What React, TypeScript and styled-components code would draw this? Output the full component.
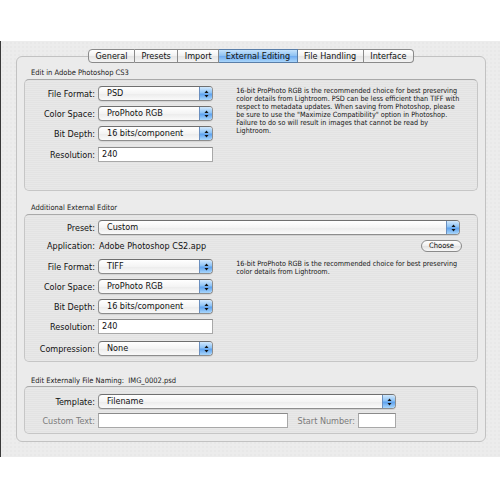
import React from "react";
import styled, { createGlobalStyle, css } from "styled-components";

const GlobalStyle = createGlobalStyle`
  html, body {
    margin: 0;
    padding: 0;
    background: #ffffff;
  }
  body {
    font-family: "DejaVu Sans Condensed", "Liberation Sans", sans-serif;
    font-size: 9px;
    color: #111;
  }
`;

const Window = styled.div`
  margin-top: 41px;
  height: 416px;
  box-sizing: border-box;
  background-color: #ececec;
  background-image: radial-gradient(#e2e2e2 0.6px, transparent 0.8px);
  background-size: 4px 4px;
  border-left: 1px solid #3a3a3a;
  padding: 8px 14px 0 15px;
  display: flex;
  flex-direction: column;
`;

const TabBar = styled.div`
  display: flex;
  justify-content: center;
  position: relative;
  z-index: 1;
  height: 14px;
`;

const Tab = styled.div<{ $active?: boolean }>`
  height: 14px;
  box-sizing: border-box;
  padding: 0 6.5px;
  display: flex;
  align-items: center;
  font-size: 9px;
  border: 1px solid #8a8a8a;
  border-left: none;
  background: linear-gradient(#ffffff, #f1f1f1 50%, #e4e4e4 51%, #f4f4f4);
  &:first-child {
    border-left: 1px solid #8a8a8a;
    border-radius: 4px 0 0 4px;
  }
  &:last-child {
    border-radius: 0 4px 4px 0;
  }
  ${(p) =>
    p.$active &&
    css`
      background: linear-gradient(#c4e1fb, #8cc0f2 50%, #6eaaf0 51%, #a9d6fb);
      border-color: #5a7ea8;
    `}
`;

const TabBox = styled.div`
  margin-top: -7px;
  flex: 0 0 auto;
  height: 386px;
  box-sizing: border-box;
  border: 1px solid #c2c2c2;
  border-radius: 6px;
  background: #ebebeb;
  padding: 9px 7px 0 7px;
  display: flex;
  flex-direction: column;
`;

const GroupTitle = styled.div<{ $h: number; $mt: number }>`
  height: ${(p) => p.$h}px;
  line-height: ${(p) => p.$h}px;
  margin-top: ${(p) => p.$mt}px;
  padding-left: 7px;
  font-size: 7.5px;
  color: #222;
`;

const Group = styled.div<{ $h: number; $pt: number }>`
  height: ${(p) => p.$h}px;
  box-sizing: border-box;
  padding: ${(p) => p.$pt}px 15px 0 0;
  border: 1px solid #c6c6c6;
  border-top-color: #a9a9a9;
  border-radius: 5px;
  background: repeating-linear-gradient(#e3e3e3 0 1px, #e8e8e8 1px 2px);
  display: flex;
  flex-direction: column;
`;

const Columns = styled.div<{ $mt?: number }>`
  display: flex;
  margin-top: ${(p) => p.$mt ?? 0}px;
`;

const FieldColumn = styled.div`
  width: 191px;
  display: flex;
  flex-direction: column;
  gap: 5px;
`;

const Row = styled.div<{ $mt?: number; $h?: number }>`
  display: flex;
  align-items: center;
  height: ${(p) => p.$h ?? 15}px;
  margin-top: ${(p) => p.$mt ?? 0}px;
`;

const Label = styled.div<{ $dim?: boolean; $w?: number }>`
  width: ${(p) => p.$w ?? 73}px;
  flex: 0 0 auto;
  text-align: right;
  padding-right: 3px;
  box-sizing: border-box;
  font-size: 9px;
  color: ${(p) => (p.$dim ? "#7b7b7b" : "#111")};
`;

const Value = styled.div`
  flex: 1;
  font-size: 9px;
  padding-left: 1px;
`;

const Popup = styled.div<{ $w: number }>`
  width: ${(p) => p.$w}px;
  height: 15px;
  box-sizing: border-box;
  display: flex;
  border: 1px solid #8d8d8d;
  border-top-color: #6f6f6f;
  border-radius: 4px;
  overflow: hidden;
  background: linear-gradient(#ffffff, #f4f4f4 50%, #ebebeb 51%, #fafafa);
  box-shadow: 0 1px 0 rgba(0, 0, 0, 0.08);
`;

const PopupText = styled.div`
  flex: 1;
  padding-left: 8px;
  font-size: 9px;
  line-height: 13px;
`;

const PopupArrow = styled.div`
  width: 12px;
  border-left: 1px solid #6a8fbf;
  background: linear-gradient(#d1e8fd, #8cc2f5 45%, #5ea2ee 55%, #a9d6fb);
  display: flex;
  align-items: center;
  justify-content: center;
`;

const TextField = styled.div<{ $w: number }>`
  width: ${(p) => p.$w}px;
  height: 15px;
  box-sizing: border-box;
  background: #fff;
  border: 1px solid #a8a8a8;
  border-top-color: #8a8a8a;
  padding-left: 3px;
  font-size: 9px;
  line-height: 13px;
`;

const Description = styled.p`
  margin: 1px 0 0 22px;
  width: 228px;
  font-size: 7.2px;
  line-height: 8px;
  color: #151515;
`;

const ChooseButton = styled.div`
  margin-left: auto;
  width: 41px;
  height: 12px;
  box-sizing: border-box;
  border: 1px solid #8a8a8a;
  border-radius: 6px;
  background: linear-gradient(#ffffff, #eeeeee 50%, #e2e2e2 51%, #f7f7f7);
  font-size: 7.5px;
  line-height: 10px;
  text-align: center;
`;

const Arrows = () => (
  <svg width="5" height="8" viewBox="0 0 5 8">
    <path d="M2.5 0.5 L4.5 3 L0.5 3 Z" fill="#111" />
    <path d="M2.5 7.5 L4.5 5 L0.5 5 Z" fill="#111" />
  </svg>
);

const Select: React.FC<{ value: string; width: number }> = ({ value, width }) => (
  <Popup $w={width}>
    <PopupText>{value}</PopupText>
    <PopupArrow>
      <Arrows />
    </PopupArrow>
  </Popup>
);

const tabs = ["General", "Presets", "Import", "External Editing", "File Handling", "Interface"];

const App: React.FC = () => {
  return (
    <>
      <GlobalStyle />
      <Window>
        <TabBar>
          {tabs.map((t) => (
            <Tab key={t} $active={t === "External Editing"}>
              {t}
            </Tab>
          ))}
        </TabBar>
        <TabBox>
          <GroupTitle $h={13} $mt={0}>Edit in Adobe Photoshop CS3</GroupTitle>
          <Group $h={112} $pt={6}>
            <Columns>
              <FieldColumn>
                <Row>
                  <Label>File Format:</Label>
                  <Select value="PSD" width={115} />
                </Row>
                <Row>
                  <Label>Color Space:</Label>
                  <Select value="ProPhoto RGB" width={115} />
                </Row>
                <Row>
                  <Label>Bit Depth:</Label>
                  <Select value="16 bits/component" width={115} />
                </Row>
                <Row $mt={1}>
                  <Label>Resolution:</Label>
                  <TextField $w={115}>240</TextField>
                </Row>
              </FieldColumn>
              <Description>
                16-bit ProPhoto RGB is the recommended choice for best preserving color details from
                Lightroom. PSD can be less efficient than TIFF with respect to metadata updates. When
                saving from Photoshop, please be sure to use the "Maximize Compatibility" option in
                Photoshop. Failure to do so will result in images that cannot be read by Lightroom.
              </Description>
            </Columns>
          </Group>

          <GroupTitle $h={12} $mt={11}>Additional External Editor</GroupTitle>
          <Group $h={148} $pt={5}>
            <Row>
              <Label>Preset:</Label>
              <Select value="Custom" width={362} />
            </Row>
            <Row $mt={5} $h={12}>
              <Label>Application:</Label>
              <Value>Adobe Photoshop CS2.app</Value>
              <ChooseButton>Choose</ChooseButton>
            </Row>
            <Columns $mt={7}>
              <FieldColumn>
                <Row>
                  <Label>File Format:</Label>
                  <Select value="TIFF" width={115} />
                </Row>
                <Row>
                  <Label>Color Space:</Label>
                  <Select value="ProPhoto RGB" width={115} />
                </Row>
                <Row>
                  <Label>Bit Depth:</Label>
                  <Select value="16 bits/component" width={115} />
                </Row>
                <Row>
                  <Label>Resolution:</Label>
                  <TextField $w={115}>240</TextField>
                </Row>
                <Row $mt={2}>
                  <Label>Compression:</Label>
                  <Select value="None" width={115} />
                </Row>
              </FieldColumn>
              <Description>
                16-bit ProPhoto RGB is the recommended choice for best preserving color details from
                Lightroom.
              </Description>
            </Columns>
          </Group>

          <GroupTitle $h={10} $mt={14}>Edit Externally File Naming:&nbsp;&nbsp;IMG_0002.psd</GroupTitle>
          <Group $h={48} $pt={7}>
            <Row>
              <Label>Template:</Label>
              <Select value="Filename" width={298} />
            </Row>
            <Row $mt={4}>
              <Label $dim>Custom Text:</Label>
              <TextField $w={190} />
              <Label $dim $w={70}>Start Number:</Label>
              <TextField $w={38} />
            </Row>
          </Group>
        </TabBox>
      </Window>
    </>
  );
};

export default App;
